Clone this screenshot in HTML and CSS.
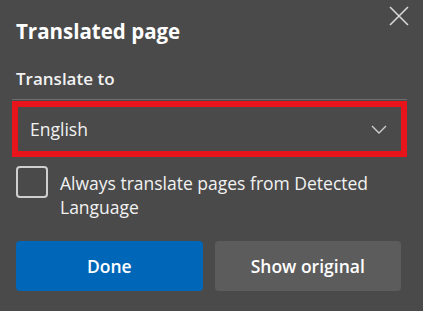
FILE: index.html
```html
<!DOCTYPE html>
<html>
<head>
  <title>Translated page</title>
  <link rel="stylesheet" href="styles.css">
</head>
<body>
  <div class="panel">
    <div class="header">
      <h2>Translated page</h2>
      <button class="close" aria-label="Close">
        <svg width="20" height="20" viewBox="0 0 20 20"><path d="M1 1 L19 19 M19 1 L1 19" stroke="#d8d8d8" stroke-width="1.6" fill="none"/></svg>
      </button>
    </div>
    <label class="field-label">Translate to</label>
    <div class="select-wrap">
      <div class="select">
        <span>English</span>
        <svg width="16" height="9" viewBox="0 0 16 9"><path d="M1 1 L8 8 L15 1" stroke="#cfcfcf" stroke-width="1.4" fill="none"/></svg>
      </div>
    </div>
    <div class="check-row">
      <span class="checkbox"></span>
      <span class="check-text">Always translate pages from Detected Language</span>
    </div>
    <div class="actions">
      <button class="btn primary">Done</button>
      <button class="btn secondary">Show original</button>
    </div>
  </div>
</body>
</html>
```

FILE: styles.css
```css
body
{
  margin: 0;
  background-color: #4a4a4a;
  color: #f2f2f2;
  font-family: "Open Sans", "Noto Sans", sans-serif;
}
.panel
{
  padding: 0 22px 0 16px;
}
.header
{
  display: flex;
  justify-content: space-between;
  align-items: flex-start;
}
h2
{
  margin: 17px 0 0 0;
  font-size: 20.5px;
  font-weight: 700;
  line-height: 28px;
  color: #fff;
}
.close
{
  margin: 6px -8px 0 0;
  padding: 0;
  background: none;
  border: none;
}
.field-label
{
  display: block;
  margin-top: 22px;
  font-size: 17px;
  font-weight: 600;
  line-height: 24px;
}
.select-wrap
{
  margin: 8px -6px 0 -4px;
  border-top: 1px solid #6e6e6e;
  padding-top: 1px;
}
.select
{
  display: flex;
  justify-content: space-between;
  align-items: center;
  height: 44px;
  padding: 0 14px 0 12px;
  border: 6px solid #e8141b;
}
.select span
{
  font-size: 17.5px;
}
.check-row
{
  display: flex;
  align-items: flex-start;
  margin-top: 9px;
}
.checkbox
{
  flex: none;
  width: 28px;
  height: 28px;
  border: 2px solid #cfcfcf;
  border-radius: 4px;
}
.check-text
{
  margin: 5px 0 0 12px;
  font-size: 17.5px;
  line-height: 24px;
}
.actions
{
  display: flex;
  gap: 12px;
  margin-top: 22px;
}
.btn
{
  flex: 1;
  height: 50px;
  border: none;
  border-radius: 4px;
  color: #fff;
  font-family: "Open Sans", "Noto Sans", sans-serif;
  font-size: 17.5px;
  font-weight: 600;
}
.primary
{
  background-color: #0067b8;
}
.secondary
{
  background-color: #5c5c5c;
}
```
